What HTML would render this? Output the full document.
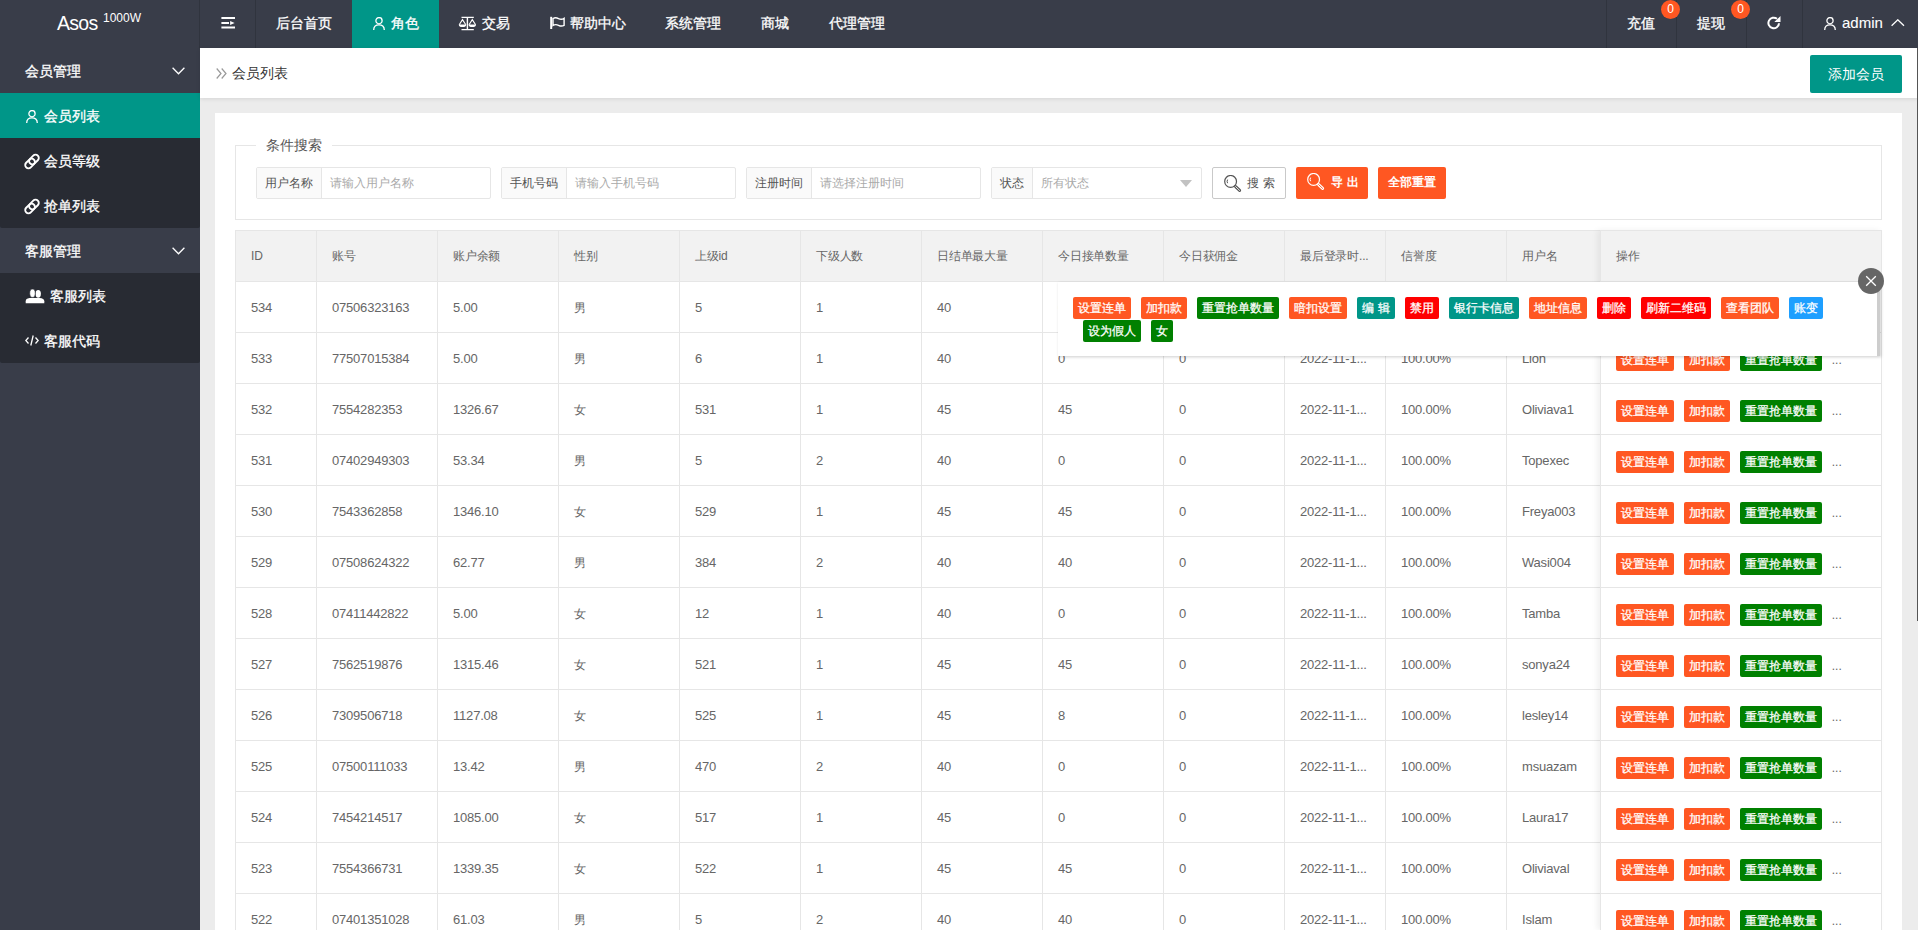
<!DOCTYPE html>
<html><head><meta charset="utf-8"><title>会员列表</title>
<style>
*{margin:0;padding:0;box-sizing:border-box}
html,body{width:1918px;height:930px;overflow:hidden}
body{font-family:"Liberation Sans",sans-serif;font-size:14px;color:#666;background:#ececec;position:relative}
.abs{position:absolute}
#hdr{left:0;top:0;width:1918px;height:48px;background:#393D49;color:#fff}
.hn{position:absolute;top:0;height:48px;line-height:46px;color:#fff;font-size:14px;white-space:nowrap;-webkit-text-stroke:0.3px #fff}
.vd{position:absolute;top:0;width:1px;height:48px;background:#30343e}
#side{left:0;top:48px;width:200px;height:882px;background:#393D49}
.si{position:absolute;left:0;width:200px;height:45px;line-height:47px;color:#fff;font-size:14px;white-space:nowrap;-webkit-text-stroke:0.3px #fff}
#bc{left:200px;top:48px;width:1718px;height:50px;background:#fff;box-shadow:0 1px 4px rgba(0,0,0,.10)}
#card{left:215px;top:113px;width:1687px;height:830px;background:#fff}
.fs{left:235px;top:145px;width:1647px;height:75px;border:1px solid #e6e6e6}
.ig{position:absolute;top:167px;height:32px;border:1px solid #e6e6e6;border-radius:2px;background:#fff}
.ig .lb{position:absolute;left:0;top:0;height:30px;line-height:30px;background:#fafafa;border-right:1px solid #e6e6e6;color:#555;font-size:12px;text-align:center}
.ig .ph{position:absolute;top:0;height:30px;line-height:30px;color:#aaa;font-size:12px;white-space:nowrap}
.btn{position:absolute;top:167px;height:32px;line-height:32px;color:#fff;background:#FF5722;border-radius:2px;font-size:12px;text-align:center;white-space:nowrap}
.tb{position:absolute;left:235px;top:230px;width:1647px;height:700px;border-left:1px solid #e6e6e6;border-right:1px solid #e6e6e6;overflow:hidden}
.tr{position:absolute;left:0;width:1645px;height:51px;border-top:1px solid #e6e6e6}
.th{background:#f2f2f2}
.th .td{line-height:50px}
.td{position:absolute;top:0;height:50px;line-height:52px;font-size:13px;letter-spacing:-0.2px;color:#666;padding-left:16px;border-left:1px solid #e6e6e6;white-space:nowrap}
.b{display:inline-block;height:22px;line-height:23px;padding:0 5px;font-size:12px;color:#fff;border-radius:2px;white-space:nowrap;vertical-align:top;-webkit-text-stroke:0.25px #fff;overflow:hidden}
.o{background:#FF5722}.g{background:#008000}.t{background:#009688}.r{background:#FF0000}.bl{background:#1E9FFF}
</style></head><body>
<div id="hdr" class="abs">
<div class="hn" style="left:57px;font-size:19.5px;line-height:46px;letter-spacing:-0.7px;-webkit-text-stroke:0">Asos</div><div class="hn" style="left:103px;font-size:12px;line-height:36px;-webkit-text-stroke:0">1000W</div><div class="vd" style="left:199px"></div><div class="vd" style="left:255px"></div><div class="vd" style="left:1606px"></div><div class="vd" style="left:1676px"></div><div class="vd" style="left:1746px"></div><div class="vd" style="left:1802px"></div><svg class="abs" style="left:221px;top:17px" width="14" height="12" viewBox="0 0 14 12"><rect x="0.4" y="0" width="13.6" height="2" fill="#fff"/><rect x="0.4" y="5" width="7.6" height="2" fill="#fff"/><path d="M9.1 3.9 L13.6 6 L9.1 7.9Z" fill="#fff"/><rect x="0.4" y="9.5" width="13.6" height="2" fill="#fff"/></svg><div class="hn" style="left:276px">后台首页</div><div class="abs" style="left:352px;top:0;width:87px;height:48px;background:#009688"></div><svg class="abs" style="left:373px;top:17px" width="12" height="13" viewBox="0 0 12 13"><circle cx="6" cy="3.7" r="3.1" fill="none" stroke="#fff" stroke-width="1.3"/><path d="M0.7 12.9 C0.7 9.5 3 7.8 6 7.8 C9 7.8 11.3 9.5 11.3 12.9" fill="none" stroke="#fff" stroke-width="1.3"/></svg><div class="hn" style="left:391px">角色</div><svg class="abs" style="left:458px;top:16px" width="20" height="15" viewBox="0 0 20 15"><path d="M3.5 1.4 H15.8 M9.4 0.8 V13.6 M3.5 13.6 H15.8" stroke="#fff" stroke-width="1.4" fill="none"/><path d="M1.2 8.8 L4.5 3.6 L7.8 8.8 M11 8.8 L14.3 3.6 L17.6 8.8" stroke="#fff" stroke-width="1.1" fill="none"/><path d="M0.8 8.4 H8.2 A3.7 2.7 0 0 1 0.8 8.4Z M10.6 8.4 H18 A3.7 2.7 0 0 1 10.6 8.4Z" fill="#fff"/></svg><div class="hn" style="left:482px">交易</div><svg class="abs" style="left:550px;top:16px" width="16" height="14" viewBox="0 0 16 14"><rect x="0.2" y="0.8" width="2" height="12.2" fill="#fff"/><path d="M3 2.5 Q5.5 1 8.5 2.6 T14.1 2.3 V9.4 Q11.5 10.8 8.5 9.3 T3 9.5Z" stroke="#fff" stroke-width="1.4" fill="none"/></svg><div class="hn" style="left:570px">帮助中心</div><div class="hn" style="left:665px">系统管理</div><div class="hn" style="left:761px">商城</div><div class="hn" style="left:829px">代理管理</div><div class="hn" style="left:1627px">充值</div><div class="abs" style="left:1661px;top:0px;width:19px;height:19px;border-radius:50%;background:#FF5722;color:#fff;font-size:12px;line-height:19px;text-align:center">0</div><div class="hn" style="left:1697px">提现</div><div class="abs" style="left:1731px;top:0px;width:19px;height:19px;border-radius:50%;background:#FF5722;color:#fff;font-size:12px;line-height:19px;text-align:center">0</div><svg class="abs" style="left:1767px;top:16px" width="14" height="14" viewBox="0 0 14 14"><path d="M12 7.2 A5.3 5.3 0 1 1 10 2.8" stroke="#fff" stroke-width="2" fill="none"/><path d="M7.3 6 H13.5 V0Z" fill="#fff"/></svg><svg class="abs" style="left:1824px;top:17px" width="12" height="13" viewBox="0 0 12 13"><circle cx="6" cy="3.7" r="3.1" fill="none" stroke="#fff" stroke-width="1.3"/><path d="M0.7 12.9 C0.7 9.5 3 7.8 6 7.8 C9 7.8 11.3 9.5 11.3 12.9" fill="none" stroke="#fff" stroke-width="1.3"/></svg><div class="hn" style="left:1842px;font-size:15px;-webkit-text-stroke:0.1px #fff">admin</div><svg class="abs" style="left:1891px;top:19px" width="14" height="8" viewBox="0 0 14 8"><path d="M0.6 6.8 L6.8 0.8 L13 6.8" stroke="#fff" stroke-width="1.3" fill="none"/></svg></div>
<div id="side" class="abs">
<div class="si" style="top:0"><span style="position:absolute;left:25px">会员管理</span><svg class="abs" style="left:172px;top:19px" width="13" height="8" viewBox="0 0 13 8"><path d="M0.6 0.8 L6.5 6.8 L12.4 0.8" stroke="#fff" stroke-width="1.3" fill="none"/></svg></div><div class="abs" style="left:0;top:90px;width:200px;height:90px;background:#282b33;border-radius:0 0 2px 2px"></div><div class="si" style="top:45px;background:#009688"><svg class="abs" style="left:26px;top:17px" width="12" height="13" viewBox="0 0 12 13"><circle cx="6" cy="3.7" r="3.1" fill="none" stroke="#fff" stroke-width="1.3"/><path d="M0.7 12.9 C0.7 9.5 3 7.8 6 7.8 C9 7.8 11.3 9.5 11.3 12.9" fill="none" stroke="#fff" stroke-width="1.3"/></svg><span style="position:absolute;left:44px">会员列表</span></div><div class="si" style="top:90px"><svg class="abs" style="left:24px;top:15px" width="17" height="17" viewBox="0 0 17 17"><rect x="4.44" y="3.31" width="11" height="6.5" rx="3.25" transform="rotate(-45 9.94 6.56)" fill="none" stroke="#fff" stroke-width="1.9"/><rect x="0.56" y="7.19" width="11" height="6.5" rx="3.25" transform="rotate(-45 6.06 10.44)" fill="none" stroke="#fff" stroke-width="1.9"/></svg><span style="position:absolute;left:44px">会员等级</span></div><div class="si" style="top:135px"><svg class="abs" style="left:24px;top:15px" width="17" height="17" viewBox="0 0 17 17"><rect x="4.44" y="3.31" width="11" height="6.5" rx="3.25" transform="rotate(-45 9.94 6.56)" fill="none" stroke="#fff" stroke-width="1.9"/><rect x="0.56" y="7.19" width="11" height="6.5" rx="3.25" transform="rotate(-45 6.06 10.44)" fill="none" stroke="#fff" stroke-width="1.9"/></svg><span style="position:absolute;left:44px">抢单列表</span></div><div class="si" style="top:180px"><span style="position:absolute;left:25px">客服管理</span><svg class="abs" style="left:172px;top:19px" width="13" height="8" viewBox="0 0 13 8"><path d="M0.6 0.8 L6.5 6.8 L12.4 0.8" stroke="#fff" stroke-width="1.3" fill="none"/></svg></div><div class="abs" style="left:0;top:225px;width:200px;height:90px;background:#282b33;border-radius:0 0 2px 2px"></div><div class="si" style="top:225px"><svg class="abs" style="left:25px;top:16px" width="20" height="15" viewBox="0 0 20 15"><ellipse cx="13.2" cy="4.8" rx="2.7" ry="3.9" fill="#fff"/><path d="M0.7 14.3 V12.3 Q0.7 9.6 4.5 9 H14.5 Q19.3 9.4 19.3 12.3 V14.3Z" fill="#fff"/><ellipse cx="7.5" cy="4.2" rx="2.8" ry="4.2" fill="#fff" stroke="#282b33" stroke-width="0.7"/></svg><span style="position:absolute;left:50px">客服列表</span></div><div class="si" style="top:270px"><svg class="abs" style="left:25px;top:17px" width="14" height="11" viewBox="0 0 14 11"><path d="M3.5 2.5 L0.8 5.5 L3.5 8.5 M10.5 2.5 L13.2 5.5 L10.5 8.5 M8.2 0.5 L5.8 10.5" stroke="#fff" stroke-width="1.3" fill="none"/></svg><span style="position:absolute;left:44px">客服代码</span></div></div>
<div id="bc" class="abs"><svg class="abs" style="left:16px;top:20px" width="11" height="11" viewBox="0 0 11 11"><path d="M0.7 0.5 L5 5.5 L0.7 10.5 M5.7 0.5 L10 5.5 L5.7 10.5" stroke="#999" stroke-width="1.2" fill="none"/></svg><div class="abs" style="left:32px;top:0;line-height:50px;color:#333;font-size:14px">会员列表</div><div class="abs" style="left:1610px;top:7px;width:92px;height:38px;line-height:38px;background:#009688;color:#fff;text-align:center;border-radius:2px;font-size:14px">添加会员</div></div>
<div id="card" class="abs"></div>
<div class="abs fs"></div><div class="abs" style="left:256px;top:137px;width:76px;height:18px;background:#fff;color:#555;font-size:14px;line-height:16px;padding-left:10px">条件搜索</div><div class="ig" style="left:256px;width:235px"><div class="lb" style="width:65px">用户名称</div><div class="ph" style="left:73px">请输入用户名称</div></div><div class="ig" style="left:501px;width:235px"><div class="lb" style="width:65px">手机号码</div><div class="ph" style="left:73px">请输入手机号码</div></div><div class="ig" style="left:746px;width:235px"><div class="lb" style="width:65px">注册时间</div><div class="ph" style="left:73px">请选择注册时间</div></div><div class="ig" style="left:991px;width:211px"><div class="lb" style="width:41px">状态</div><div class="ph" style="left:49px">所有状态</div><svg class="abs" style="left:188px;top:12px" width="12" height="7" viewBox="0 0 12 7"><path d="M0 0 H12 L6 7Z" fill="#c2c2c2"/></svg></div><div class="btn" style="left:1212px;width:74px;background:#fff;border:1px solid #c9c9c9;color:#555"><svg class="abs" style="left:11px;top:7px" width="18" height="18" viewBox="0 0 18 18"><circle cx="6.6" cy="6.4" r="5.9" fill="none" stroke="#555" stroke-width="1.2"/><path d="M11.6 11.6 L15.6 15.4" stroke="#555" stroke-width="3" stroke-linecap="round"/><path d="M11.6 11.6 L15.6 15.4" stroke="#fff" stroke-width="0.9" stroke-linecap="round"/><path d="M3.6 4.6 A3.6 3.6 0 0 0 3.6 8.2" stroke="#555" stroke-width="1" fill="none"/></svg><span class="abs" style="left:34px;top:0;line-height:30px;letter-spacing:4px">搜索</span></div><div class="btn" style="left:1296px;width:72px"><svg class="abs" style="left:11px;top:6px" width="18" height="18" viewBox="0 0 18 18"><circle cx="6.6" cy="6.4" r="5.9" fill="none" stroke="#fff" stroke-width="1.2"/><path d="M11.6 11.6 L15.6 15.4" stroke="#fff" stroke-width="3" stroke-linecap="round"/><path d="M11.6 11.6 L15.6 15.4" stroke="#FF5722" stroke-width="0.9" stroke-linecap="round"/><path d="M3.6 4.6 A3.6 3.6 0 0 0 3.6 8.2" stroke="#fff" stroke-width="1" fill="none"/></svg><span class="abs" style="left:35px;top:0;line-height:30px;letter-spacing:4px;font-weight:bold">导出</span></div><div class="btn" style="left:1378px;width:68px;line-height:30px;font-weight:bold">全部重置</div><div class="tb"><div class="tr th" style="top:0px"><div class="td" style="left:-1px;width:81px;border-left:0;padding-left:16px"><span style="font-size:12px">ID</span></div><div class="td" style="left:80px;width:121px;padding-left:15px"><span style="font-size:12px">账号</span></div><div class="td" style="left:201px;width:121px;padding-left:15px"><span style="font-size:12px">账户余额</span></div><div class="td" style="left:322px;width:121px;padding-left:15px"><span style="font-size:12px">性别</span></div><div class="td" style="left:443px;width:121px;padding-left:15px"><span style="font-size:12px">上级id</span></div><div class="td" style="left:564px;width:121px;padding-left:15px"><span style="font-size:12px">下级人数</span></div><div class="td" style="left:685px;width:121px;padding-left:15px"><span style="font-size:12px">日结单最大量</span></div><div class="td" style="left:806px;width:121px;padding-left:15px"><span style="font-size:12px">今日接单数量</span></div><div class="td" style="left:927px;width:121px;padding-left:15px"><span style="font-size:12px">今日获佣金</span></div><div class="td" style="left:1048px;width:101px;padding-left:15px"><span style="font-size:12px">最后登录时...</span></div><div class="td" style="left:1149px;width:121px;padding-left:15px"><span style="font-size:12px">信誉度</span></div><div class="td" style="left:1270px;width:121px;padding-left:15px"><span style="font-size:12px">用户名</span></div></div><div class="tr " style="top:51px"><div class="td" style="left:-1px;width:81px;border-left:0;padding-left:16px">534</div><div class="td" style="left:80px;width:121px;padding-left:15px">07506323163</div><div class="td" style="left:201px;width:121px;padding-left:15px">5.00</div><div class="td" style="left:322px;width:121px;padding-left:15px"><span style="font-size:12px">男</span></div><div class="td" style="left:443px;width:121px;padding-left:15px">5</div><div class="td" style="left:564px;width:121px;padding-left:15px">1</div><div class="td" style="left:685px;width:121px;padding-left:15px">40</div><div class="td" style="left:806px;width:121px;padding-left:15px">0</div><div class="td" style="left:927px;width:121px;padding-left:15px">0</div><div class="td" style="left:1048px;width:101px;padding-left:15px">2022-11-1...</div><div class="td" style="left:1149px;width:121px;padding-left:15px">100.00%</div><div class="td" style="left:1270px;width:121px;padding-left:15px">Lion</div></div><div class="tr " style="top:102px"><div class="td" style="left:-1px;width:81px;border-left:0;padding-left:16px">533</div><div class="td" style="left:80px;width:121px;padding-left:15px">77507015384</div><div class="td" style="left:201px;width:121px;padding-left:15px">5.00</div><div class="td" style="left:322px;width:121px;padding-left:15px"><span style="font-size:12px">男</span></div><div class="td" style="left:443px;width:121px;padding-left:15px">6</div><div class="td" style="left:564px;width:121px;padding-left:15px">1</div><div class="td" style="left:685px;width:121px;padding-left:15px">40</div><div class="td" style="left:806px;width:121px;padding-left:15px">0</div><div class="td" style="left:927px;width:121px;padding-left:15px">0</div><div class="td" style="left:1048px;width:101px;padding-left:15px">2022-11-1...</div><div class="td" style="left:1149px;width:121px;padding-left:15px">100.00%</div><div class="td" style="left:1270px;width:121px;padding-left:15px">Lion</div></div><div class="tr " style="top:153px"><div class="td" style="left:-1px;width:81px;border-left:0;padding-left:16px">532</div><div class="td" style="left:80px;width:121px;padding-left:15px">7554282353</div><div class="td" style="left:201px;width:121px;padding-left:15px">1326.67</div><div class="td" style="left:322px;width:121px;padding-left:15px"><span style="font-size:12px">女</span></div><div class="td" style="left:443px;width:121px;padding-left:15px">531</div><div class="td" style="left:564px;width:121px;padding-left:15px">1</div><div class="td" style="left:685px;width:121px;padding-left:15px">45</div><div class="td" style="left:806px;width:121px;padding-left:15px">45</div><div class="td" style="left:927px;width:121px;padding-left:15px">0</div><div class="td" style="left:1048px;width:101px;padding-left:15px">2022-11-1...</div><div class="td" style="left:1149px;width:121px;padding-left:15px">100.00%</div><div class="td" style="left:1270px;width:121px;padding-left:15px">Oliviava1</div></div><div class="tr " style="top:204px"><div class="td" style="left:-1px;width:81px;border-left:0;padding-left:16px">531</div><div class="td" style="left:80px;width:121px;padding-left:15px">07402949303</div><div class="td" style="left:201px;width:121px;padding-left:15px">53.34</div><div class="td" style="left:322px;width:121px;padding-left:15px"><span style="font-size:12px">男</span></div><div class="td" style="left:443px;width:121px;padding-left:15px">5</div><div class="td" style="left:564px;width:121px;padding-left:15px">2</div><div class="td" style="left:685px;width:121px;padding-left:15px">40</div><div class="td" style="left:806px;width:121px;padding-left:15px">0</div><div class="td" style="left:927px;width:121px;padding-left:15px">0</div><div class="td" style="left:1048px;width:101px;padding-left:15px">2022-11-1...</div><div class="td" style="left:1149px;width:121px;padding-left:15px">100.00%</div><div class="td" style="left:1270px;width:121px;padding-left:15px">Topexec</div></div><div class="tr " style="top:255px"><div class="td" style="left:-1px;width:81px;border-left:0;padding-left:16px">530</div><div class="td" style="left:80px;width:121px;padding-left:15px">7543362858</div><div class="td" style="left:201px;width:121px;padding-left:15px">1346.10</div><div class="td" style="left:322px;width:121px;padding-left:15px"><span style="font-size:12px">女</span></div><div class="td" style="left:443px;width:121px;padding-left:15px">529</div><div class="td" style="left:564px;width:121px;padding-left:15px">1</div><div class="td" style="left:685px;width:121px;padding-left:15px">45</div><div class="td" style="left:806px;width:121px;padding-left:15px">45</div><div class="td" style="left:927px;width:121px;padding-left:15px">0</div><div class="td" style="left:1048px;width:101px;padding-left:15px">2022-11-1...</div><div class="td" style="left:1149px;width:121px;padding-left:15px">100.00%</div><div class="td" style="left:1270px;width:121px;padding-left:15px">Freya003</div></div><div class="tr " style="top:306px"><div class="td" style="left:-1px;width:81px;border-left:0;padding-left:16px">529</div><div class="td" style="left:80px;width:121px;padding-left:15px">07508624322</div><div class="td" style="left:201px;width:121px;padding-left:15px">62.77</div><div class="td" style="left:322px;width:121px;padding-left:15px"><span style="font-size:12px">男</span></div><div class="td" style="left:443px;width:121px;padding-left:15px">384</div><div class="td" style="left:564px;width:121px;padding-left:15px">2</div><div class="td" style="left:685px;width:121px;padding-left:15px">40</div><div class="td" style="left:806px;width:121px;padding-left:15px">40</div><div class="td" style="left:927px;width:121px;padding-left:15px">0</div><div class="td" style="left:1048px;width:101px;padding-left:15px">2022-11-1...</div><div class="td" style="left:1149px;width:121px;padding-left:15px">100.00%</div><div class="td" style="left:1270px;width:121px;padding-left:15px">Wasi004</div></div><div class="tr " style="top:357px"><div class="td" style="left:-1px;width:81px;border-left:0;padding-left:16px">528</div><div class="td" style="left:80px;width:121px;padding-left:15px">07411442822</div><div class="td" style="left:201px;width:121px;padding-left:15px">5.00</div><div class="td" style="left:322px;width:121px;padding-left:15px"><span style="font-size:12px">女</span></div><div class="td" style="left:443px;width:121px;padding-left:15px">12</div><div class="td" style="left:564px;width:121px;padding-left:15px">1</div><div class="td" style="left:685px;width:121px;padding-left:15px">40</div><div class="td" style="left:806px;width:121px;padding-left:15px">0</div><div class="td" style="left:927px;width:121px;padding-left:15px">0</div><div class="td" style="left:1048px;width:101px;padding-left:15px">2022-11-1...</div><div class="td" style="left:1149px;width:121px;padding-left:15px">100.00%</div><div class="td" style="left:1270px;width:121px;padding-left:15px">Tamba</div></div><div class="tr " style="top:408px"><div class="td" style="left:-1px;width:81px;border-left:0;padding-left:16px">527</div><div class="td" style="left:80px;width:121px;padding-left:15px">7562519876</div><div class="td" style="left:201px;width:121px;padding-left:15px">1315.46</div><div class="td" style="left:322px;width:121px;padding-left:15px"><span style="font-size:12px">女</span></div><div class="td" style="left:443px;width:121px;padding-left:15px">521</div><div class="td" style="left:564px;width:121px;padding-left:15px">1</div><div class="td" style="left:685px;width:121px;padding-left:15px">45</div><div class="td" style="left:806px;width:121px;padding-left:15px">45</div><div class="td" style="left:927px;width:121px;padding-left:15px">0</div><div class="td" style="left:1048px;width:101px;padding-left:15px">2022-11-1...</div><div class="td" style="left:1149px;width:121px;padding-left:15px">100.00%</div><div class="td" style="left:1270px;width:121px;padding-left:15px">sonya24</div></div><div class="tr " style="top:459px"><div class="td" style="left:-1px;width:81px;border-left:0;padding-left:16px">526</div><div class="td" style="left:80px;width:121px;padding-left:15px">7309506718</div><div class="td" style="left:201px;width:121px;padding-left:15px">1127.08</div><div class="td" style="left:322px;width:121px;padding-left:15px"><span style="font-size:12px">女</span></div><div class="td" style="left:443px;width:121px;padding-left:15px">525</div><div class="td" style="left:564px;width:121px;padding-left:15px">1</div><div class="td" style="left:685px;width:121px;padding-left:15px">45</div><div class="td" style="left:806px;width:121px;padding-left:15px">8</div><div class="td" style="left:927px;width:121px;padding-left:15px">0</div><div class="td" style="left:1048px;width:101px;padding-left:15px">2022-11-1...</div><div class="td" style="left:1149px;width:121px;padding-left:15px">100.00%</div><div class="td" style="left:1270px;width:121px;padding-left:15px">lesley14</div></div><div class="tr " style="top:510px"><div class="td" style="left:-1px;width:81px;border-left:0;padding-left:16px">525</div><div class="td" style="left:80px;width:121px;padding-left:15px">07500111033</div><div class="td" style="left:201px;width:121px;padding-left:15px">13.42</div><div class="td" style="left:322px;width:121px;padding-left:15px"><span style="font-size:12px">男</span></div><div class="td" style="left:443px;width:121px;padding-left:15px">470</div><div class="td" style="left:564px;width:121px;padding-left:15px">2</div><div class="td" style="left:685px;width:121px;padding-left:15px">40</div><div class="td" style="left:806px;width:121px;padding-left:15px">0</div><div class="td" style="left:927px;width:121px;padding-left:15px">0</div><div class="td" style="left:1048px;width:101px;padding-left:15px">2022-11-1...</div><div class="td" style="left:1149px;width:121px;padding-left:15px">100.00%</div><div class="td" style="left:1270px;width:121px;padding-left:15px">msuazam</div></div><div class="tr " style="top:561px"><div class="td" style="left:-1px;width:81px;border-left:0;padding-left:16px">524</div><div class="td" style="left:80px;width:121px;padding-left:15px">7454214517</div><div class="td" style="left:201px;width:121px;padding-left:15px">1085.00</div><div class="td" style="left:322px;width:121px;padding-left:15px"><span style="font-size:12px">女</span></div><div class="td" style="left:443px;width:121px;padding-left:15px">517</div><div class="td" style="left:564px;width:121px;padding-left:15px">1</div><div class="td" style="left:685px;width:121px;padding-left:15px">45</div><div class="td" style="left:806px;width:121px;padding-left:15px">0</div><div class="td" style="left:927px;width:121px;padding-left:15px">0</div><div class="td" style="left:1048px;width:101px;padding-left:15px">2022-11-1...</div><div class="td" style="left:1149px;width:121px;padding-left:15px">100.00%</div><div class="td" style="left:1270px;width:121px;padding-left:15px">Laura17</div></div><div class="tr " style="top:612px"><div class="td" style="left:-1px;width:81px;border-left:0;padding-left:16px">523</div><div class="td" style="left:80px;width:121px;padding-left:15px">7554366731</div><div class="td" style="left:201px;width:121px;padding-left:15px">1339.35</div><div class="td" style="left:322px;width:121px;padding-left:15px"><span style="font-size:12px">女</span></div><div class="td" style="left:443px;width:121px;padding-left:15px">522</div><div class="td" style="left:564px;width:121px;padding-left:15px">1</div><div class="td" style="left:685px;width:121px;padding-left:15px">45</div><div class="td" style="left:806px;width:121px;padding-left:15px">45</div><div class="td" style="left:927px;width:121px;padding-left:15px">0</div><div class="td" style="left:1048px;width:101px;padding-left:15px">2022-11-1...</div><div class="td" style="left:1149px;width:121px;padding-left:15px">100.00%</div><div class="td" style="left:1270px;width:121px;padding-left:15px">Oliviaval</div></div><div class="tr " style="top:663px"><div class="td" style="left:-1px;width:81px;border-left:0;padding-left:16px">522</div><div class="td" style="left:80px;width:121px;padding-left:15px">07401351028</div><div class="td" style="left:201px;width:121px;padding-left:15px">61.03</div><div class="td" style="left:322px;width:121px;padding-left:15px"><span style="font-size:12px">男</span></div><div class="td" style="left:443px;width:121px;padding-left:15px">5</div><div class="td" style="left:564px;width:121px;padding-left:15px">2</div><div class="td" style="left:685px;width:121px;padding-left:15px">40</div><div class="td" style="left:806px;width:121px;padding-left:15px">40</div><div class="td" style="left:927px;width:121px;padding-left:15px">0</div><div class="td" style="left:1048px;width:101px;padding-left:15px">2022-11-1...</div><div class="td" style="left:1149px;width:121px;padding-left:15px">100.00%</div><div class="td" style="left:1270px;width:121px;padding-left:15px">Islam</div></div></div>
<div class="abs" style="left:1600px;top:230px;width:282px;height:700px;background:#fff;box-shadow:-3px 0 6px rgba(0,0,0,.06);border-left:1px solid #e6e6e6;border-right:1px solid #e6e6e6;overflow:hidden"><div class="abs" style="left:0;top:0;width:280px;height:51px;background:#f2f2f2;border-top:1px solid #e6e6e6;line-height:50px;padding-left:15px;font-size:12px">操作</div><div class="abs" style="left:0;top:51px;width:280px;height:51px;border-top:1px solid #e6e6e6;padding:16px 0 0 15px;white-space:nowrap"><span class="b o">设置连单</span> <span class="b o" style="margin-left:6px">加扣款</span> <span class="b g" style="margin-left:6px">重置抢单数量</span><span style="margin-left:10px;color:#666;font-size:12px;vertical-align:top;line-height:22px">...</span></div><div class="abs" style="left:0;top:102px;width:280px;height:51px;border-top:1px solid #e6e6e6;padding:16px 0 0 15px;white-space:nowrap"><span class="b o">设置连单</span> <span class="b o" style="margin-left:6px">加扣款</span> <span class="b g" style="margin-left:6px">重置抢单数量</span><span style="margin-left:10px;color:#666;font-size:12px;vertical-align:top;line-height:22px">...</span></div><div class="abs" style="left:0;top:153px;width:280px;height:51px;border-top:1px solid #e6e6e6;padding:16px 0 0 15px;white-space:nowrap"><span class="b o">设置连单</span> <span class="b o" style="margin-left:6px">加扣款</span> <span class="b g" style="margin-left:6px">重置抢单数量</span><span style="margin-left:10px;color:#666;font-size:12px;vertical-align:top;line-height:22px">...</span></div><div class="abs" style="left:0;top:204px;width:280px;height:51px;border-top:1px solid #e6e6e6;padding:16px 0 0 15px;white-space:nowrap"><span class="b o">设置连单</span> <span class="b o" style="margin-left:6px">加扣款</span> <span class="b g" style="margin-left:6px">重置抢单数量</span><span style="margin-left:10px;color:#666;font-size:12px;vertical-align:top;line-height:22px">...</span></div><div class="abs" style="left:0;top:255px;width:280px;height:51px;border-top:1px solid #e6e6e6;padding:16px 0 0 15px;white-space:nowrap"><span class="b o">设置连单</span> <span class="b o" style="margin-left:6px">加扣款</span> <span class="b g" style="margin-left:6px">重置抢单数量</span><span style="margin-left:10px;color:#666;font-size:12px;vertical-align:top;line-height:22px">...</span></div><div class="abs" style="left:0;top:306px;width:280px;height:51px;border-top:1px solid #e6e6e6;padding:16px 0 0 15px;white-space:nowrap"><span class="b o">设置连单</span> <span class="b o" style="margin-left:6px">加扣款</span> <span class="b g" style="margin-left:6px">重置抢单数量</span><span style="margin-left:10px;color:#666;font-size:12px;vertical-align:top;line-height:22px">...</span></div><div class="abs" style="left:0;top:357px;width:280px;height:51px;border-top:1px solid #e6e6e6;padding:16px 0 0 15px;white-space:nowrap"><span class="b o">设置连单</span> <span class="b o" style="margin-left:6px">加扣款</span> <span class="b g" style="margin-left:6px">重置抢单数量</span><span style="margin-left:10px;color:#666;font-size:12px;vertical-align:top;line-height:22px">...</span></div><div class="abs" style="left:0;top:408px;width:280px;height:51px;border-top:1px solid #e6e6e6;padding:16px 0 0 15px;white-space:nowrap"><span class="b o">设置连单</span> <span class="b o" style="margin-left:6px">加扣款</span> <span class="b g" style="margin-left:6px">重置抢单数量</span><span style="margin-left:10px;color:#666;font-size:12px;vertical-align:top;line-height:22px">...</span></div><div class="abs" style="left:0;top:459px;width:280px;height:51px;border-top:1px solid #e6e6e6;padding:16px 0 0 15px;white-space:nowrap"><span class="b o">设置连单</span> <span class="b o" style="margin-left:6px">加扣款</span> <span class="b g" style="margin-left:6px">重置抢单数量</span><span style="margin-left:10px;color:#666;font-size:12px;vertical-align:top;line-height:22px">...</span></div><div class="abs" style="left:0;top:510px;width:280px;height:51px;border-top:1px solid #e6e6e6;padding:16px 0 0 15px;white-space:nowrap"><span class="b o">设置连单</span> <span class="b o" style="margin-left:6px">加扣款</span> <span class="b g" style="margin-left:6px">重置抢单数量</span><span style="margin-left:10px;color:#666;font-size:12px;vertical-align:top;line-height:22px">...</span></div><div class="abs" style="left:0;top:561px;width:280px;height:51px;border-top:1px solid #e6e6e6;padding:16px 0 0 15px;white-space:nowrap"><span class="b o">设置连单</span> <span class="b o" style="margin-left:6px">加扣款</span> <span class="b g" style="margin-left:6px">重置抢单数量</span><span style="margin-left:10px;color:#666;font-size:12px;vertical-align:top;line-height:22px">...</span></div><div class="abs" style="left:0;top:612px;width:280px;height:51px;border-top:1px solid #e6e6e6;padding:16px 0 0 15px;white-space:nowrap"><span class="b o">设置连单</span> <span class="b o" style="margin-left:6px">加扣款</span> <span class="b g" style="margin-left:6px">重置抢单数量</span><span style="margin-left:10px;color:#666;font-size:12px;vertical-align:top;line-height:22px">...</span></div><div class="abs" style="left:0;top:663px;width:280px;height:51px;border-top:1px solid #e6e6e6;padding:16px 0 0 15px;white-space:nowrap"><span class="b o">设置连单</span> <span class="b o" style="margin-left:6px">加扣款</span> <span class="b g" style="margin-left:6px">重置抢单数量</span><span style="margin-left:10px;color:#666;font-size:12px;vertical-align:top;line-height:22px">...</span></div></div>
<div class="abs" style="left:1058px;top:282px;width:822px;height:74px;background:#fff;box-shadow:1px 1px 3px rgba(0,0,0,.2)"><div class="abs" style="left:15px;top:15px;white-space:nowrap"><span class="b o" style="margin-left:0px">设置连单</span><span class="b o" style="margin-left:10px">加扣款</span><span class="b g" style="margin-left:10px">重置抢单数量</span><span class="b o" style="margin-left:10px">暗扣设置</span><span class="b t" style="margin-left:10px">编<span style="display:inline-block;width:4px"></span>辑</span><span class="b r" style="margin-left:10px">禁用</span><span class="b t" style="margin-left:10px">银行卡信息</span><span class="b o" style="margin-left:10px">地址信息</span><span class="b r" style="margin-left:10px">删除</span><span class="b r" style="margin-left:10px">刷新二维码</span><span class="b o" style="margin-left:10px">查看团队</span><span class="b bl" style="margin-left:10px">账变</span></div><div class="abs" style="left:25px;top:38px;white-space:nowrap"><span class="b g">设为假人</span><span class="b g" style="margin-left:10px">女</span></div><div class="abs" style="left:819px;top:9px;width:3px;height:65px;background:#cdcdcd"></div></div><div class="abs" style="left:1858px;top:268px;width:26px;height:26px;border-radius:50%;background:#666"><svg class="abs" style="left:7px;top:7px" width="12" height="12" viewBox="0 0 12 12"><path d="M1.2 1.2 L10.8 10.8 M10.8 1.2 L1.2 10.8" stroke="#fff" stroke-width="1.3"/></svg></div><div class="abs" style="left:1917px;top:48px;width:1px;height:573px;background:#555"></div>
</body></html>
